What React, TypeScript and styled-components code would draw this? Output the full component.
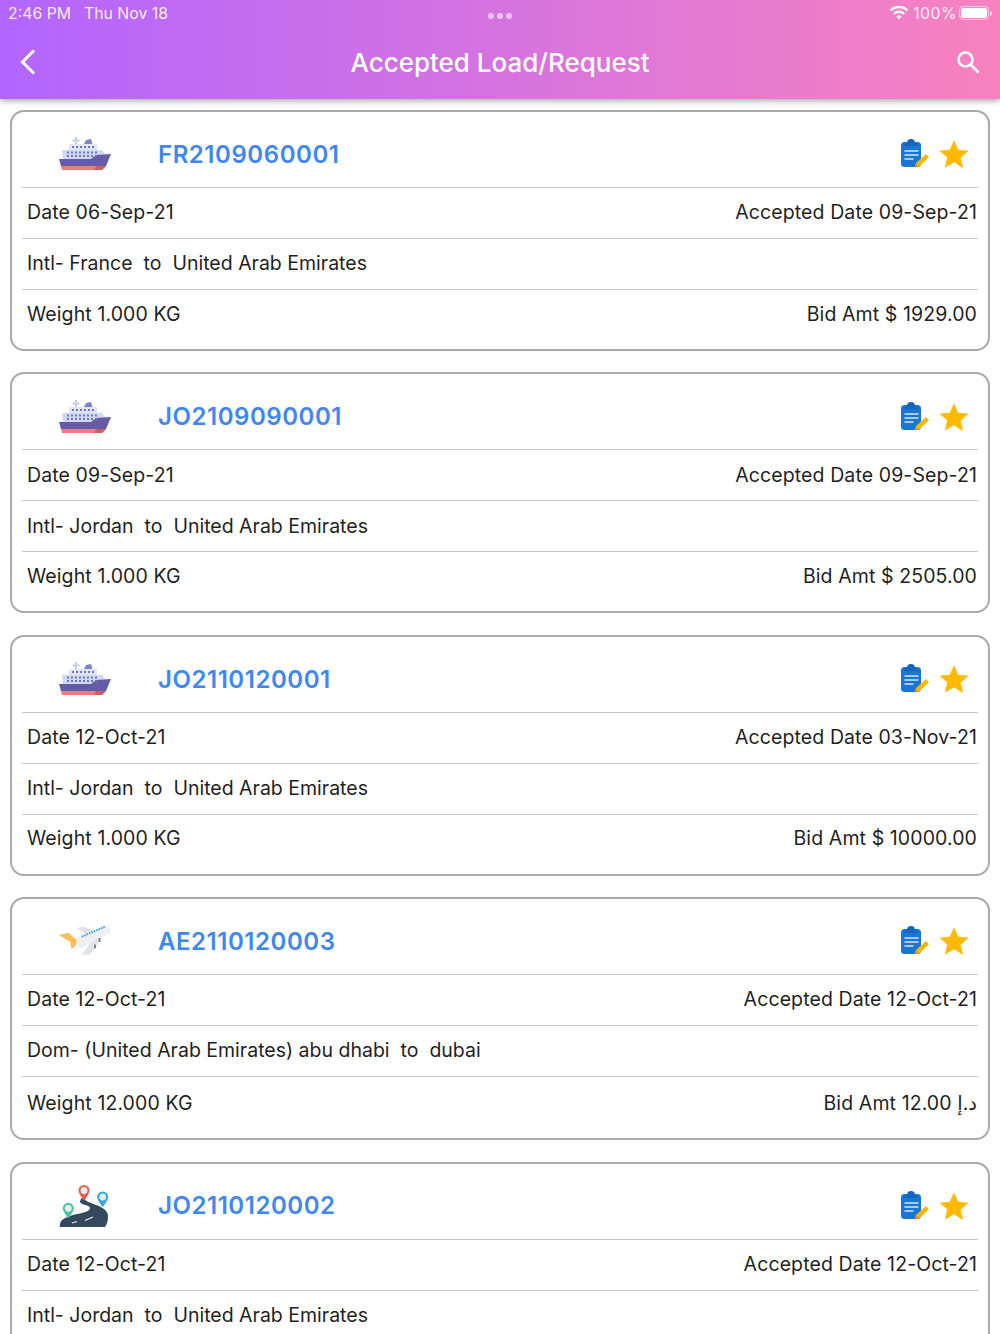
import styled, { createGlobalStyle } from "styled-components";

type Mode = "ship" | "plane" | "road";

interface Load {
    code: string;
    mode: Mode;
    date: string;
    accepted: string;
    route: string;
    weight: string;
    bid: string;
    tall?: boolean;
}

const loads: Load[] = [
    { code: "FR2109060001", mode: "ship", date: "06-Sep-21", accepted: "09-Sep-21", route: "Intl- France\u00a0 to\u00a0 United Arab Emirates", weight: "1.000 KG", bid: "$ 1929.00" },
    { code: "JO2109090001", mode: "ship", date: "09-Sep-21", accepted: "09-Sep-21", route: "Intl- Jordan\u00a0 to\u00a0 United Arab Emirates", weight: "1.000 KG", bid: "$ 2505.00" },
    { code: "JO2110120001", mode: "ship", date: "12-Oct-21", accepted: "03-Nov-21", route: "Intl- Jordan\u00a0 to\u00a0 United Arab Emirates", weight: "1.000 KG", bid: "$ 10000.00" },
    { code: "AE2110120003", mode: "plane", date: "12-Oct-21", accepted: "12-Oct-21", route: "Dom- (United Arab Emirates) abu dhabi\u00a0 to\u00a0 dubai", weight: "12.000 KG", bid: "12.00 د.إ", tall: true },
    { code: "JO2110120002", mode: "road", date: "12-Oct-21", accepted: "12-Oct-21", route: "Intl- Jordan\u00a0 to\u00a0 United Arab Emirates", weight: "1.000 KG", bid: "$ 100.00" },
];

const windowCols = [12, 16, 20, 24, 28, 32, 36, 40];

const ShipIcon = () => (
    <svg width="52" height="34" viewBox="0 0 52 34">
        <path d="M16 0h2v2.500h2.500v2H18V7h-2V4.500h-2.500v-2H16z" fill="#c3cdea" />
        <path d="M25 7l2-4 5-1 1.500 5z" fill="#7f84c4" />
        <path d="M10 7h28v6H10z" fill="#dfe5f7" />
        <path d="M3 13h40l3 4-10 5H4z" fill="#cfd9f2" />
        <path d="M0 22h32l5-4 15-1-5 12H2z" fill="#665ba8" />
        <path d="M2 29h45l-4 4H3z" fill="#ec7d7f" />
        <path d="M37 29h10l-4 4h-8z" fill="#c9605f" />
        <g fill="#6f78bf">
            {windowCols.slice(0, 6).map((x) => <rect key={x} x={x + 1} y="9" width="2" height="2" />)}
            {windowCols.map((x) => <rect key={x} x={x - 4} y="14.500" width="2" height="2" />)}
            {windowCols.map((x) => <rect key={x} x={x - 4} y="18" width="2" height="2" />)}
        </g>
    </svg>
);

const PlaneIcon = () => (
    <svg width="54" height="36" viewBox="0 0 54 36">
        <path d="M17.700 5.300l6.600-1.600 13.400 4-10 4.300z" fill="#dfe2e5" />
        <path d="M36 13h8.300L31 32h-8.300z" fill="#e2e5e8" />
        <path d="M16 15.300L46 2l6 3.300-1 4.400-28.300 15.600-6.700-3.300z" fill="#eef0f2" />
        <path d="M0 12l9.300-2.300 8.400 7.300-.7 5-4.300 4L11 18.700z" fill="#f9bd5a" />
        <path d="M22.700 13.700L46 3.700" stroke="#3d9ad9" strokeWidth="1.800" strokeDasharray="1.600 1" fill="none" />
        <rect x="39.500" y="15" width="2" height="4" fill="#7b8791" />
        <rect x="35" y="21.500" width="2" height="4" fill="#7b8791" />
    </svg>
);

const Pin = ({ x, y, color }: { x: number; y: number; color: string }) => (
    <g>
        <path d={`M${x} ${y - 5.500}a5.500 5.500 0 0 0-5.500 5.500c0 3.500 5.500 10 5.500 10s5.500-6.500 5.500-10a5.500 5.500 0 0 0-5.500-5.500z`} fill={color} />
        <circle cx={x} cy={y} r="3.400" fill="#e8edf0" />
    </g>
);

const RoadIcon = () => (
    <svg width="52" height="44" viewBox="0 -1 52 44">
        <path d="M1 42C0 37 3 33 14 30c8-2 17-3 17-7 0-3-9-3-10-6 0-3 2-4 4-5l2 1c-2 2 0 3 5 5 8 3 17 6 17 13 0 5-1 8-3 11z" fill="#34495e" />
        <path d="M26 35.500l8-3.500M13 38l5-1.500" stroke="#e8edf0" strokeWidth="1.200" fill="none" />
        <Pin x={9.300} y={23.300} color="#4cc2a0" />
        <Pin x={25} y={5.500} color="#e8604c" />
        <Pin x={43.700} y={12} color="#36a6e0" />
    </svg>
);

const NoteIcon = () => (
    <svg width="30" height="30" viewBox="0 0 30 30">
        <rect x="1" y="3" width="20" height="25" rx="3.500" fill="#1976d2" />
        <path d="M7 4.500V4a4 4 0 0 1 8 0v.500h2.500V7h-13V4.500z" fill="#1565c0" />
        <path d="M4.500 12h14M4.500 16h14M4.500 20h9" stroke="#d5e6f7" strokeWidth="1.600" />
        <path d="M15 28.500l1-4.500 10-9 3 3.200-10 9.200z" fill="#f5b800" />
        <path d="M15 28.500l1-4.500 3 3.200z" fill="#e89c00" />
    </svg>
);

const StarIcon = () => (
    <svg width="30" height="30" viewBox="0 0 24 24">
        <path d="M12 1.500l3.200 7.300 7.900.800-5.900 5.300 1.700 7.800L12 18.400l-6.900 4 1.700-7.800L.9 9.600l7.900-.8z" fill="#ffb900" stroke="#ffb900" strokeWidth="0.500" strokeLinejoin="round" />
    </svg>
);

const modeIcons = { ship: ShipIcon, plane: PlaneIcon, road: RoadIcon };

const LoadCard = ({ load }: { load: Load }) => {
    const Icon = modeIcons[load.mode];
    return (
        <Card>
            <CardHeader>
                <ModeSlot><Icon /></ModeSlot>
                <Code>{load.code}</Code>
                <HeaderIcons>
                    <NoteIcon />
                    <StarIcon />
                </HeaderIcons>
            </CardHeader>
            <DataRow>
                <span>Date {load.date}</span>
                <span>Accepted Date {load.accepted}</span>
            </DataRow>
            <Row>
                <span>{load.route}</span>
            </Row>
            <LastRow $tall={load.tall}>
                <span>Weight {load.weight}</span>
                <span>Bid Amt {load.bid}</span>
            </LastRow>
        </Card>
    );
};

export default function App() {
    return (
        <>
            <GlobalStyle />
            <Page>
                <TopBar>
                    <StatusBar>
                        <StatusLeft>
                            <span>2:46 PM</span>
                            <span>Thu Nov 18</span>
                        </StatusLeft>
                        <Dots><i /><i /><i /></Dots>
                        <StatusRight>
                            <svg width="20" height="14" viewBox="0 0 20 14">
                                <path d="M10 13.500l-2.500-3a3.600 3.600 0 0 1 5 0zM5.700 8.700L4 6.900a8.500 8.500 0 0 1 12 0l-1.700 1.800a6 6 0 0 0-8.600 0zM2.500 5.300L.8 3.500a13 13 0 0 1 18.400 0l-1.700 1.800a10.600 10.600 0 0 0-15 0z" fill="#fff" />
                            </svg>
                            <Percent>100%</Percent>
                            <Battery><BatteryFill /></Battery>
                            <BatteryNub />
                        </StatusRight>
                    </StatusBar>
                    <NavBar>
                        <svg width="20" height="30" viewBox="0 0 20 30">
                            <path d="M16 3.500L4.500 15 16 26.500" stroke="#fff" strokeWidth="3" fill="none" />
                        </svg>
                        <NavTitle>Accepted Load/Request</NavTitle>
                        <SearchSlot>
                            <svg width="28" height="28" viewBox="0 0 28 28">
                                <circle cx="11.500" cy="11.500" r="7" stroke="#fff" strokeWidth="2.600" fill="none" />
                                <path d="M16.500 16.500l8 8" stroke="#fff" strokeWidth="2.800" />
                            </svg>
                        </SearchSlot>
                    </NavBar>
                </TopBar>
                <List>
                    {loads.map((load) => (
                        <LoadCard key={load.code} load={load} />
                    ))}
                </List>
            </Page>
        </>
    );
}

const GlobalStyle = createGlobalStyle`
    html, body {
        margin: 0;
        padding: 0;
        background: #fff;
        overflow: hidden;
    }
`;

const Page = styled.div`
    width: 1000px;
    height: 1334px;
    overflow: hidden;
    font-family: Inter, "Liberation Sans", "DejaVu Sans", sans-serif;
    color: #1f1f1f;
`;

const TopBar = styled.header`
    height: 99px;
    box-sizing: border-box;
    background: linear-gradient(90deg, #b265ff 0%, #f882bf 100%);
    box-shadow: 0 2px 6px rgba(0, 0, 0, 0.35);
    color: #fff;
    position: relative;
`;

const StatusBar = styled.div`
    height: 26px;
    padding: 0 8px;
    display: grid;
    grid-template-columns: 1fr auto 1fr;
    align-items: center;
    font-size: 15.800px;
    color: rgba(255, 255, 255, 0.88);
`;

const StatusLeft = styled.div`
    display: flex;
    gap: 13px;
`;

const Dots = styled.div`
    display: flex;
    gap: 3px;
    margin-top: 6px;

    i {
        width: 6px;
        height: 6px;
        border-radius: 50%;
        background: rgba(255, 255, 255, 0.55);
    }
`;

const StatusRight = styled.div`
    display: flex;
    justify-content: flex-end;
    align-items: center;
    gap: 4px;
`;

const Percent = styled.span`
    letter-spacing: 0.5px;
    margin-right: -2px;
`;

const Battery = styled.div`
    width: 30px;
    height: 14px;
    border: 1px solid rgba(255, 255, 255, 0.6);
    border-radius: 4px;
    padding: 1px;
    box-sizing: border-box;
`;

const BatteryFill = styled.div`
    height: 100%;
    background: #fff;
    border-radius: 2px;
`;

const BatteryNub = styled.div`
    width: 2px;
    height: 5px;
    margin-left: -3px;
    border-radius: 0 2px 2px 0;
    background: rgba(255, 255, 255, 0.6);
`;

const NavBar = styled.div`
    height: 73px;
    padding: 0 18px 1px 18px;
    box-sizing: border-box;
    display: grid;
    grid-template-columns: 1fr auto 1fr;
    align-items: center;
`;

const NavTitle = styled.h1`
    margin: 0;
    font-size: 26px;
    font-weight: 500;
`;

const SearchSlot = styled.div`
    display: flex;
    justify-content: flex-end;
`;

const List = styled.main`
    padding: 11px 10px 0;
    display: flex;
    flex-direction: column;
    gap: 21.400px;
`;

const Card = styled.article`
    border: 2px solid #a9a9a9;
    border-radius: 14px;
    padding: 0 10px;
    background: #fff;
`;

const CardHeader = styled.div`
    height: 76px;
    padding-top: 9.500px;
    box-sizing: border-box;
    display: flex;
    align-items: center;
    border-bottom: 1px solid #c9c9c9;
`;

const ModeSlot = styled.div`
    width: 136px;
    padding-left: 37px;
    box-sizing: border-box;
    display: flex;
    align-items: center;
`;

const Code = styled.div`
    font-size: 24px;
    font-weight: 600;
    color: #4087f5;
    letter-spacing: 0.55px;
`;

const HeaderIcons = styled.div`
    margin-left: auto;
    margin-right: 9px;
    display: flex;
    align-items: center;
    gap: 9.500px;
`;

const Row = styled.div`
    height: 51px;
    padding: 0 1px 1.500px 5px;
    box-sizing: border-box;
    display: flex;
    align-items: center;
    justify-content: space-between;
    border-bottom: 1px solid #c9c9c9;
    font-size: 19.500px;
`;

const DataRow = styled(Row)`
    letter-spacing: 0.1px;
`;

const LastRow = styled(DataRow)<{ $tall?: boolean }>`
    height: ${(p) => (p.$tall ? "61px" : "59px")};
    padding-bottom: ${(p) => (p.$tall ? "10px" : "12px")};
    border-bottom: none;
`;
